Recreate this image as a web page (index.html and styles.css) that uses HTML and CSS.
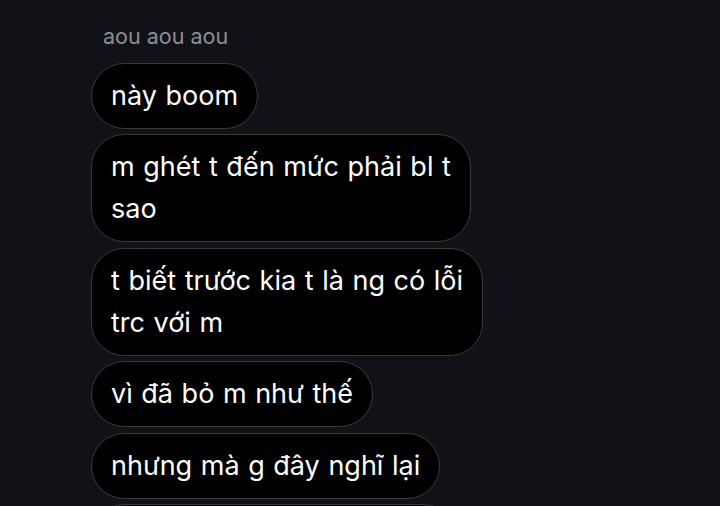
FILE: index.html
```html
<!DOCTYPE html>
<html lang="vi">
<head>
    <meta charset="UTF-8">
    <meta name="viewport" content="width=device-width, initial-scale=1.0">
    <title>Chat</title>
    <link rel="stylesheet" href="styles.css">
</head>
<body>

    <div class="thread">
        <div class="sender">aou aou aou</div>

        <div class="bubble">này boom</div>
        <div class="bubble">m ghét t đến mức phải bl t<br>sao</div>
        <div class="bubble">t biết trước kia t là ng có lỗi<br>trc với m</div>
        <div class="bubble">vì đã bỏ m như thế</div>
        <div class="bubble">nhưng mà g đây nghĩ lại</div>
        <div class="bubble">thì t thấy t cũng sai nhiều</div>
    </div>

</body>
</html>
```

FILE: styles.css
```css
body {
    font-family: Inter, "Noto Sans", sans-serif;
    background-color: #111217;
    margin: 0;
    padding: 0;
    height: 100vh;
    overflow: hidden;
}

.thread {
    display: flex;
    flex-direction: column;
    align-items: flex-start;
    gap: 5.5px;
    padding: 22px 0 0 91px;
}

.sender {
    color: #8e8e94;
    font-size: 21.5px;
    line-height: 28px;
    margin: 0 0 7px 12px;
}

.bubble {
    background-color: #000;
    color: #fff;
    font-size: 27px;
    line-height: 42px;
    word-spacing: 1px;
    padding: 11px 19px;
    border: 1.5px solid #3a3a3e;
    border-radius: 33px;
    white-space: nowrap;
}
```
